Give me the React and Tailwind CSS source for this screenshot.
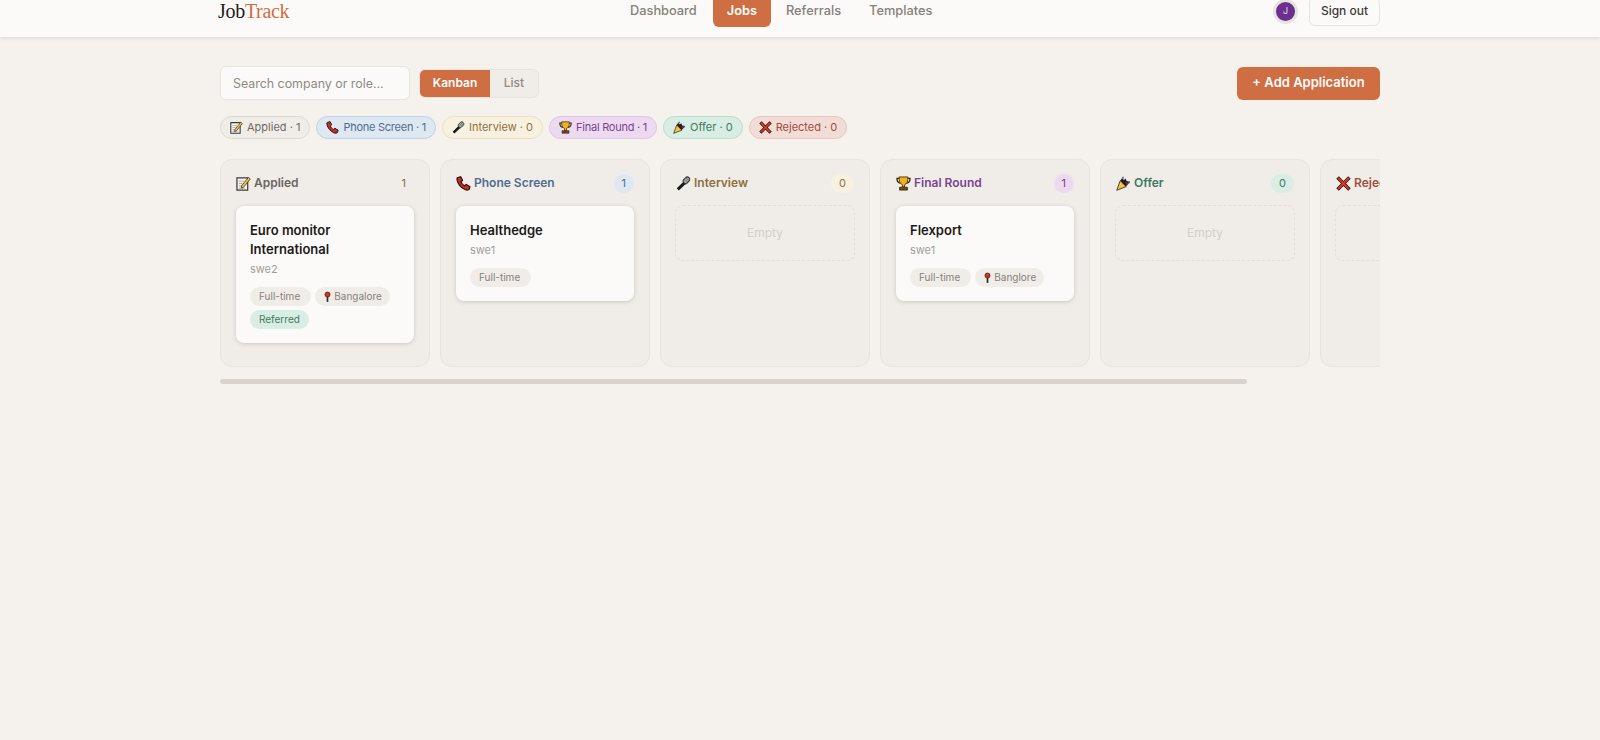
const MemoIcon = () => (
  <svg viewBox="0 0 16 16" className="w-[15px] h-[15px] shrink-0">
    <path d="M1 2h11.500v13H1z" fill="#f4f2ec" stroke="#3a3a3a" strokeWidth="1.300" />
    <path d="M3 5.500h5.500M3 8h4M3 10.500h3.500M3 13h6.500" stroke="#a0a0a0" strokeWidth="0.900" />
    <path d="M6 10.500 13.200 1.500l2 1.600-7.200 9-2.400.8z" fill="#f5c33b" stroke="#2a2a2a" strokeWidth="0.800" />
  </svg>
);
const PhoneIcon = () => (
  <svg viewBox="0 0 16 16" className="w-[15px] h-[15px] shrink-0">
    <path d="M1.500 1.800 5 .8 7 4.600 5.300 6.100c.5 1.700 1.900 3.300 3.800 4.300l1.800-1.500 4 2.500-.8 2.900c-.9.800-2.700.9-4.500.2C5.500 12.700 2.100 8.600 1.100 4.200.900 3.200 1 2.400 1.500 1.800z" fill="#d8261c" stroke="#161616" strokeWidth="1.200" />
  </svg>
);
const MicIcon = () => (
  <svg viewBox="0 0 16 16" className="w-[15px] h-[15px] shrink-0">
    <path d="M8.500 6.500 1.800 13.200 3 14.500 9.800 8z" fill="#2a2a2a" stroke="#161616" strokeWidth="1.400" />
    <path d="M8 4.200 10.500 1.600c1-.9 2.400-.7 3.300.2s1.100 2.400.2 3.300L11.500 7.800c-.9.800-2 .6-2.800-.2S7.300 5.100 8 4.200z" fill="#a8a8a8" stroke="#2a2a2a" strokeWidth="1.100" />
    <path d="M9.500 3.800 12 6.300M11 2.300 13.500 4.800" stroke="#555" strokeWidth="0.700" />
  </svg>
);
const TrophyIcon = () => (
  <svg viewBox="0 0 16 16" className="w-[15px] h-[15px] shrink-0">
    <path d="M4 2.500H1c0 3.200 1.200 5 3.800 5.300M12 2.500h3c0 3.200-1.200 5-3.800 5.300" fill="none" stroke="#3a2a10" strokeWidth="1.400" />
    <path d="M3.300 1h9.400c.2 4.200-.8 7.200-3.500 8.300v2.400H6.800V9.300C4.100 8.200 3.100 5.200 3.300 1z" fill="#f3b21c" stroke="#3a2a10" strokeWidth="0.900" />
    <path d="M3.800 12h8.400v3H3.800z" fill="#7a4a1c" stroke="#2a1a0a" strokeWidth="0.800" />
  </svg>
);
const PopperIcon = () => (
  <svg viewBox="0 0 16 16" className="w-[15px] h-[15px] shrink-0">
    <path d="M.800 15.200 4.500 5 11 11.200z" fill="#f7c33c" stroke="#2a2a2a" strokeWidth="0.900" />
    <path d="M4.500 5 6.500 2.200l1.800 2 2-1.500 1 2.700 3.700.7-3 3.600-1.500 1.500z" fill="#2a1a20" />
    <path d="M6 1.500 8 .5l.6 2.500zM12 6l3 0-1.200 2.400z" fill="#1f6f80" />
    <path d="M10 6.500 13 7.500 11.200 9.500z" fill="#a8232c" />
  </svg>
);
const CrossIcon = () => (
  <svg viewBox="0 0 16 16" className="w-[15px] h-[15px] shrink-0">
    <path d="M3 3 13 13M13 3 3 13" stroke="#1a1a1a" strokeWidth="3.800" strokeLinecap="square" />
    <path d="M3 3 13 13M13 3 3 13" stroke="#e0371c" strokeWidth="2.200" strokeLinecap="square" />
  </svg>
);
const PinIcon = () => (
  <svg viewBox="0 0 10 16" className="w-[7px] h-[12px] shrink-0">
    <path d="M5 7v8" stroke="#2a2a2a" strokeWidth="2.400" />
    <circle cx="5" cy="4.500" r="3.600" fill="#d8311c" stroke="#2a1a1a" strokeWidth="1" />
  </svg>
);

const stages = [
  {
    name: "Applied", count: 1, Icon: MemoIcon,
    chip: "bg-[#f0ede8] border-[#ddd8d1] text-[#6f6a64]",
    title: "text-[#6b6660]", badge: "bg-[#f0ede8] text-[#8a6d4a]",
    cards: [{ company: "Euro monitor International", role: "swe2", location: "Bangalore", referred: true }],
  },
  {
    name: "Phone Screen", count: 1, Icon: PhoneIcon,
    chip: "bg-[#dde8f2] border-[#bed2e3] text-[#4f6d90] -tracking-[0.25px]",
    title: "text-[#4f6d90]", badge: "bg-[#dde8f2] text-[#4f6d90]",
    cards: [{ company: "Healthedge", role: "swe1" }],
  },
  {
    name: "Interview", count: 0, Icon: MicIcon,
    chip: "bg-[#f9f1df] border-[#ebdec3] text-[#8f703f]",
    title: "text-[#8f703f]", badge: "bg-[#f9f1df] text-[#8f703f]",
    cards: [],
  },
  {
    name: "Final Round", count: 1, Icon: TrophyIcon,
    chip: "bg-[#eedaf0] border-[#dfc4e5] text-[#7b4491] -tracking-[0.25px]",
    title: "text-[#7b4491]", badge: "bg-[#eedaf0] text-[#7b4491]",
    cards: [{ company: "Flexport", role: "swe1", location: "Banglore" }],
  },
  {
    name: "Offer", count: 0, Icon: PopperIcon,
    chip: "bg-[#d8ede3] border-[#bcdccc] text-[#3f7a5f]",
    title: "text-[#3f7a5f]", badge: "bg-[#d8ede3] text-[#3f7a5f]",
    cards: [],
  },
  {
    name: "Rejected", count: 0, Icon: CrossIcon,
    chip: "bg-[#f2dcd6] border-[#e6c6be] text-[#a34d3c]",
    title: "text-[#a34d3c]", badge: "bg-[#f2dcd6] text-[#a34d3c]",
    cards: [],
  },
];

function JobCard({ company, role, location, referred }) {
  return (
    <div className="bg-[#fbfaf8] rounded-lg px-[14px] pt-[15px] pb-[14px] shadow-[0_1px_4px_rgba(60,50,40,0.2)]">
      <div className="text-[13px] leading-[19px] font-semibold text-[#1c1a18]">{company}</div>
      <div className="text-[11px] leading-[17px] mt-[2px] text-[#a39e98]">{role}</div>
      <div className="flex flex-wrap gap-x-1 gap-y-[4px] mt-[9px]">
        <span className="h-[19px] pl-[9px] pr-[11px] rounded-full bg-[#f0ede8] text-[10px] leading-[19px] text-[#86817b]">Full-time</span>
        {location && (
          <span className="h-[19px] pl-[9px] pr-[8px] rounded-full bg-[#f0ede8] text-[10px] flex items-center gap-[3px] text-[#86817b]">
            <PinIcon />
            {location}
          </span>
        )}
        {referred && (
          <span className="h-[19px] px-[9px] rounded-full bg-[#d8ede3] text-[10px] leading-[19px] text-[#3f7a5f]">Referred</span>
        )}
      </div>
    </div>
  );
}

function Column({ stage }) {
  const { name, count, Icon, title, badge, cards } = stage;
  return (
    <div className="w-[210px] h-[208px] shrink-0 rounded-xl border border-[#e7e3dd] bg-[#f0ede8] px-[15px] pt-[14px]">
      <div className="flex items-center justify-between h-[19px] mb-[13px]">
        <div className={`flex items-center gap-[3px] pb-[1px] text-[12px] font-semibold ${title}`}>
          <Icon />
          {name}
        </div>
        <span className={`h-[19px] px-2 rounded-full text-[11px] leading-[19px] ${badge}`}>{count}</span>
      </div>
      {cards.length > 0 ? (
        <div className="flex flex-col gap-2">
          {cards.map((c) => (
            <JobCard key={c.company} {...c} />
          ))}
        </div>
      ) : (
        <div className="h-[56px] -mt-[1px] -mx-[1px] rounded-lg border border-dashed border-[#e2ded8] flex items-center justify-center text-[12px] text-[#d3cfc9]">
          Empty
        </div>
      )}
    </div>
  );
}

export default function App() {
  return (
    <div className="min-h-[740px] h-[740px] overflow-hidden bg-[#f5f2ed] font-[family-name:Inter,sans-serif]">
      <header className="h-[37px] bg-[#fbfaf8] shadow-[0_1px_4px_rgba(60,50,40,0.16)] overflow-hidden">
        <div className="w-[1160px] mx-auto h-[50px] -mt-[14px] flex items-center justify-between">
          <div className="font-[family-name:'Liberation_Serif',serif] text-[20px] text-[#1f1a17] -tracking-[0.3px] -ml-[2px] -mt-[1px]">
            Job<span className="text-[#cf6d43]">Track</span>
          </div>
          <nav className="flex items-center gap-[2px] text-[12.8px] font-medium text-[#86817b] -ml-[1px]">
            <a className="px-[14px] py-[8px] leading-[16px]">Dashboard</a>
            <a className="px-[14px] py-[8px] leading-[16px] rounded-md bg-[#cf6d43] text-white font-semibold">Jobs</a>
            <a className="px-[13px] py-[8px] leading-[16px]">Referrals</a>
            <a className="px-[13px] py-[8px] leading-[16px]">Templates</a>
          </nav>
          <div className="flex items-center gap-[11px]">
            <span className="w-[25px] h-[25px] rounded-full bg-[#6b2f8f] border-[3px] border-[#e7e3dd] flex items-center justify-center text-[9px] text-[#e6d9ee]">J</span>
            <button className="w-[71px] h-[29px] rounded-md border border-[#e7e3dd] text-[12px] font-medium text-[#3f3b37]">Sign out</button>
          </div>
        </div>
      </header>

      <main className="w-[1160px] mx-auto pt-[29px]">
        <div className="flex items-center justify-between">
          <div className="flex items-center gap-[9px]">
            <input
              placeholder="Search company or role..."
              className="w-[190px] h-[34px] px-3 rounded-md border border-[#e7e3dd] bg-[#fbfaf8] text-[12.4px] placeholder:text-[#8f8a84] outline-none"
            />
            <div className="flex h-[29px] rounded-md border border-[#e7e3dd] bg-[#f0ede8] overflow-hidden text-[12px]">
              <button className="w-[70px] bg-[#cf6d43] text-white font-semibold">Kanban</button>
              <button className="w-[48px] text-[#8f8a84] font-medium">List</button>
            </div>
          </div>
          <button className="w-[143px] h-[33px] rounded-md bg-[#cf6d43] text-white text-[13px] font-semibold">+ Add Application</button>
        </div>

        <div className="flex gap-[6px] mt-[16px]">
          {stages.map(({ name, count, Icon, chip }) => (
            <span key={name} className={`h-[23px] px-[9px] rounded-full border flex items-center gap-[4px] text-[11px] [&>svg]:w-[13px] [&>svg]:h-[13px] ${chip}`}>
              <Icon />
              {name} · {count}
            </span>
          ))}
        </div>

        <div className="flex gap-[10px] mt-[20px] overflow-hidden">
          {stages.map((s) => (
            <Column key={s.name} stage={s} />
          ))}
        </div>
        <div className="w-[1027px] h-[5px] mt-[12px] rounded-full bg-[#d8d3cd]" />
      </main>
    </div>
  );
}
